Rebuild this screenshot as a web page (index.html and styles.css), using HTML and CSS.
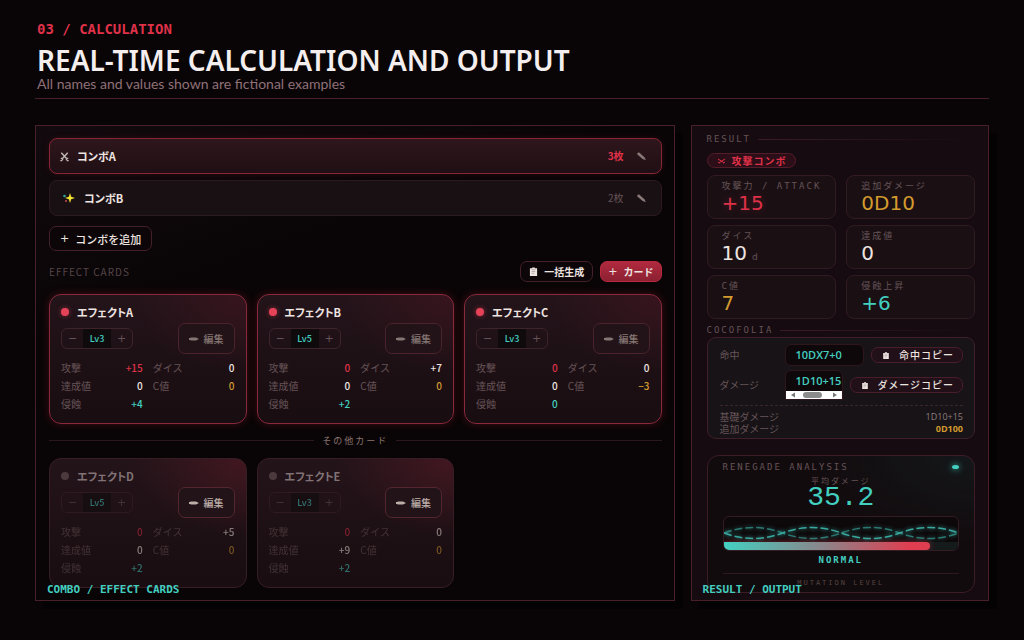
FILE: index.html
```
<!DOCTYPE html>
<html lang="ja">
<head>
<meta charset="utf-8">
<meta name="viewport" content="width=device-width, initial-scale=1">
<title>Real-time calculation and output</title>
<link rel="stylesheet" href="styles.css">
</head>
<body>
<svg class="defs" width="0" height="0" aria-hidden="true">
  <symbol id="i-swords" viewBox="0 0 12 12"><path d="M2.500 2l6 6.500M9.500 2L3.500 8.500" stroke="currentColor" stroke-width="1.500" fill="none"/><path d="M2 7.500l2.500 2.500M10 7.500L7.500 10M1.500 10.500h2M8.500 10.500h2" stroke="currentColor" stroke-width="1.200" fill="none"/></symbol>
  <symbol id="i-pencil" viewBox="0 0 12 12"><path d="M1.500 2.500L3.200 1.300l6 5.400 1.600 3.300-3.600-1.200-6-5.200z" fill="currentColor"/></symbol>
  <symbol id="i-flat" viewBox="0 0 10 6"><path d="M0 2h1.500V1.600H7L10 3 7 4.400H1.500V4H0z" fill="currentColor"/></symbol>
  <symbol id="i-clip" viewBox="0 0 10 10"><path d="M1 1.500h2.500V.5h3v1H9V10H1z" fill="currentColor"/><path d="M3 3h4M3 5h4M3 7h3" stroke="#8b7f80" stroke-width=".6"/></symbol>
</svg>
<div class="page">
  <header class="head">
    <p class="eyebrow">03 / CALCULATION</p>
    <h1 class="title">REAL-TIME CALCULATION AND OUTPUT</h1>
    <p class="sub">All names and values shown are fictional examples</p>
  </header>
  <main class="panels">
    <section class="panel panel-cards">
      <div class="combos">
        <div class="combo combo-on">
          <svg class="combo-icon"><use href="#i-swords"/></svg><span class="combo-name">コンボA</span>
          <span class="count">3枚</span><button class="ghost" aria-label="コンボAを編集"><svg class="pen"><use href="#i-pencil"/></svg></button>
        </div>
        <div class="combo">
          <svg class="spark" viewBox="0 0 18 12"><path d="M11 1l1.200 3.800L16 6l-3.800 1.200L11 11 9.800 7.200 6 6l3.800-1.200z" fill="#f4e230"/><circle cx="5.500" cy="4" r="1.300" fill="#2fa79d"/><circle cx="7" cy="9" r="1" fill="#d04a58"/></svg><span class="combo-name">コンボB</span>
          <span class="count">2枚</span><button class="ghost" aria-label="コンボBを編集"><svg class="pen"><use href="#i-pencil"/></svg></button>
        </div>
      </div>
      <button class="btn add"><span class="plus">+</span>コンボを追加</button>
      <div class="bar">
        <h2 class="bar-title">EFFECT CARDS</h2>
        <button class="btn"><svg class="clip"><use href="#i-clip"/></svg>一括生成</button>
        <button class="btn primary"><span class="plus">+</span>カード</button>
      </div>
      <div class="cards">
        <article class="card card-on">
          <h3 class="name"><i class="dot"></i>エフェクトA</h3>
          <div class="tools"><div class="step"><button>−</button><span class="lv">Lv3</span><button>+</button></div><button class="edit"><svg class="flat"><use href="#i-flat"/></svg>編集</button></div>
          <dl class="stats"><div><dt>攻撃</dt><dd class="red">+15</dd></div><div><dt>ダイス</dt><dd>0</dd></div><div><dt>達成値</dt><dd>0</dd></div><div><dt>C値</dt><dd class="gold">0</dd></div><div><dt>侵蝕</dt><dd class="teal">+4</dd></div></dl>
        </article>
        <article class="card card-on">
          <h3 class="name"><i class="dot"></i>エフェクトB</h3>
          <div class="tools"><div class="step"><button>−</button><span class="lv">Lv5</span><button>+</button></div><button class="edit"><svg class="flat"><use href="#i-flat"/></svg>編集</button></div>
          <dl class="stats"><div><dt>攻撃</dt><dd class="red">0</dd></div><div><dt>ダイス</dt><dd>+7</dd></div><div><dt>達成値</dt><dd>0</dd></div><div><dt>C値</dt><dd class="gold">0</dd></div><div><dt>侵蝕</dt><dd class="teal">+2</dd></div></dl>
        </article>
        <article class="card card-on">
          <h3 class="name"><i class="dot"></i>エフェクトC</h3>
          <div class="tools"><div class="step"><button>−</button><span class="lv">Lv3</span><button>+</button></div><button class="edit"><svg class="flat"><use href="#i-flat"/></svg>編集</button></div>
          <dl class="stats"><div><dt>攻撃</dt><dd class="red">0</dd></div><div><dt>ダイス</dt><dd>0</dd></div><div><dt>達成値</dt><dd>0</dd></div><div><dt>C値</dt><dd class="gold">−3</dd></div><div><dt>侵蝕</dt><dd class="teal">0</dd></div></dl>
        </article>
      </div>
      <p class="divider">その他カード</p>
      <div class="cards">
        <article class="card card-off">
          <h3 class="name"><i class="dot"></i>エフェクトD</h3>
          <div class="tools"><div class="step"><button>−</button><span class="lv">Lv5</span><button>+</button></div><button class="edit"><svg class="flat"><use href="#i-flat"/></svg>編集</button></div>
          <dl class="stats"><div><dt>攻撃</dt><dd class="red">0</dd></div><div><dt>ダイス</dt><dd>+5</dd></div><div><dt>達成値</dt><dd>0</dd></div><div><dt>C値</dt><dd class="gold">0</dd></div><div><dt>侵蝕</dt><dd class="teal">+2</dd></div></dl>
        </article>
        <article class="card card-off">
          <h3 class="name"><i class="dot"></i>エフェクトE</h3>
          <div class="tools"><div class="step"><button>−</button><span class="lv">Lv3</span><button>+</button></div><button class="edit"><svg class="flat"><use href="#i-flat"/></svg>編集</button></div>
          <dl class="stats"><div><dt>攻撃</dt><dd class="red">0</dd></div><div><dt>ダイス</dt><dd>0</dd></div><div><dt>達成値</dt><dd>+9</dd></div><div><dt>C値</dt><dd class="gold">0</dd></div><div><dt>侵蝕</dt><dd class="teal">+2</dd></div></dl>
        </article>
      </div>
      <p class="caption">COMBO / EFFECT CARDS</p>
    </section>

    <section class="panel panel-result">
      <h2 class="section">RESULT</h2>
      <p class="chip"><svg class="chip-icon" viewBox="0 0 10 6"><path d="M1 .8l6.500 4M9 .8L2.500 4.800M1 4l2 1.500M9 4L7 5.500" stroke="currentColor" stroke-width="1.100" fill="none"/></svg>攻撃コンボ</p>
      <dl class="tiles">
        <div class="tile"><dt>攻撃力 / ATTACK</dt><dd class="red glow">+15</dd></div>
        <div class="tile"><dt>追加ダメージ</dt><dd class="gold">0D10</dd></div>
        <div class="tile"><dt>ダイス</dt><dd>10<small>d</small></dd></div>
        <div class="tile"><dt>達成値</dt><dd>0</dd></div>
        <div class="tile"><dt>C値</dt><dd class="gold">7</dd></div>
        <div class="tile"><dt>侵蝕上昇</dt><dd class="teal">+6</dd></div>
      </dl>
      <h2 class="section section-coco">COCOFOLIA</h2>
      <div class="coco">
        <div class="line"><span class="key">命中</span><output class="formula">10DX7+0</output><button class="copy"><svg class="clip-flat"><use href="#i-clip"/></svg>命中コピー</button></div>
        <div class="line line-scroll"><span class="key">ダメージ</span><output class="formula scroller"><span>1D10+15</span><svg class="scrollbar" viewBox="0 0 56 8" preserveAspectRatio="none" aria-hidden="true"><rect width="56" height="8" fill="#fff"/><path d="M9 1.500v5L5 4zM47 1.500v5L51 4z" fill="#777"/><rect x="17" y="1" width="19" height="6" rx="3" fill="#8c8c8c"/></svg></output><button class="copy"><svg class="clip-flat"><use href="#i-clip"/></svg>ダメージコピー</button></div>
        <dl class="base"><div><dt>基礎ダメージ</dt><dd>1D10+15</dd></div><div><dt>追加ダメージ</dt><dd class="gold strong">0D100</dd></div></dl>
      </div>
      <div class="analysis">
        <h2 class="an-head">RENEGADE ANALYSIS<i class="led"></i></h2>
        <p class="avg-label">平均ダメージ</p>
        <p class="avg">35.2</p>
        <div class="meter">
          <svg class="wave" viewBox="0 0 236 25" preserveAspectRatio="none" aria-hidden="true">
            <g fill="none" stroke="#39a99f" stroke-width="1.500" stroke-dasharray="8 3"><path d="M0 16Q29.500 5 59 16T118 16T177 16T236 16" opacity=".65"/><path d="M0 16Q29.500 27 59 16T118 16T177 16T236 16"/></g>
          </svg>
          <div class="track"><div class="fill" style="width:88%"></div></div>
        </div>
        <p class="state">NORMAL</p>
        <p class="mutation">MUTATION LEVEL</p>
      </div>
      <p class="caption">RESULT / OUTPUT</p>
    </section>
  </main>
</div>
</body>
</html>
```
FILE: styles.css
```
:root {
  --red: #df3148;
  --gold: #d39a2e;
  --teal: #43cfc0;
  --line: #492029;
  --muted: #665356;
  --ui: "Noto Sans", "Noto Sans CJK JP", sans-serif;
  --jp: "Noto Sans CJK JP", sans-serif;
  --mono: "DejaVu Sans Mono", "Noto Sans CJK JP", monospace;
}
* { box-sizing: border-box; }
body, h1, h2, h3, p, dl, dd { margin: 0; }
body { background: #090506; color: #eee4e0; font-family: var(--jp); }
button { margin: 0; padding: 0; border: 0; background: none; color: inherit; font: inherit; cursor: pointer; }
svg { flex: none; }
.defs { position: absolute; }
.page { padding: 20px 35px 30px; }

.head { padding: 0 2px 5px; border-bottom: 1px solid var(--line); margin-bottom: 26px; }
.eyebrow { color: var(--red); font: bold 14px/18px var(--mono); margin-bottom: 7px; }
.title { color: #f4eeee; font: 600 28px/30px var(--ui); }
.sub { color: #907078; font: 14px/18px Lato, sans-serif; }

.panels { display: grid; grid-template-columns: 15fr 7fr; gap: 16px; }
.panel { position: relative; min-width: 0; border: 1px solid var(--line); box-shadow: 8px 8px 0 #040203; }
.panel-cards { padding: 12px 12px 12px 13px; background: linear-gradient(160deg, #120a0e, #090506 30%); }
.panel-result { padding: 6px 13px 7px 15px; background: #150b10; }
.caption { position: absolute; left: 11px; bottom: 3px; color: var(--teal); font: bold 11px/14px var(--mono); }

.red { color: var(--red); }
.gold { color: var(--gold); }
.teal { color: var(--teal); }

.combos { display: grid; gap: 6px; }
.combo { display: flex; align-items: center; height: 36px; padding: 0 14px 0 9px; border: 1px solid #2c1a20; border-radius: 8px; background: #191013; font: bold 11px/18px var(--jp); font-feature-settings: "palt"; }
.combo-on { border-color: #892536; background: linear-gradient(#2e161c, #1f0f14); box-shadow: 0 0 6px #5c142055; }
.combo-icon { width: 11px; height: 11px; margin-right: 7px; color: #c5bcba; }
.spark { width: 18px; height: 12px; margin-right: 7px; }
.combo-name { flex: 1; }
.count { color: var(--muted); font-size: 10px; font-weight: 400; margin-right: 12px; }
.combo-on .count { color: var(--red); font-weight: 700; }
.ghost { display: flex; }
.pen { width: 11px; height: 11px; color: #887878; }

.btn { display: flex; align-items: center; justify-content: center; gap: 6px; height: 21px; padding: 0 8px; border: 1px solid #442028; border-radius: 7px; background: #0c0608; font: bold 10px/14px var(--jp); }
.plus { font: 11px/14px "DejaVu Sans", sans-serif; }
.add { height: 25px; margin-top: 10px; padding: 0 10px; font: 500 11px/16px var(--jp); }
.clip { width: 9px; height: 9px; }
.primary { padding: 0 7px; border-color: #b8283f; background: linear-gradient(#b12a3e, #8b2032); }
.bar { display: flex; align-items: center; gap: 7px; margin: 10px 0 12px; }
.bar-title { flex: 1; color: #554548; font: 10px/16px var(--jp); letter-spacing: 1px; }

.cards { display: grid; grid-template-columns: repeat(3, minmax(0, 1fr)); gap: 10px; }
.card { padding: 8px 11px 10px; border: 1px solid #371d24; border-radius: 12px; background: radial-gradient(ellipse at 100% 0, #421720, transparent 42%), linear-gradient(#23141a, #190d11); }
.card-on { border-color: #8a293b; background: radial-gradient(ellipse at 100% 0, #37141d, transparent 42%), linear-gradient(#23141a, #180d11); box-shadow: 0 0 8px #8a182a66; }
.name { display: flex; align-items: center; gap: 8px; font: bold 11px/18px var(--jp); font-feature-settings: "palt"; }
.dot { width: 8px; height: 8px; border-radius: 50%; background: #e64258; box-shadow: 0 0 5px #e6425888; }
.tools { display: flex; align-items: center; justify-content: space-between; margin: 2px 0 5px; }
.step { display: grid; grid-template-columns: 21px 28px 21px; height: 21px; border: 1px solid #3d242b; border-radius: 6px; overflow: hidden; color: #665156; text-align: center; font: 11px/19px "DejaVu Sans", sans-serif; }
.lv { background: #0f0b0d; color: var(--teal); font: 500 9px/19px var(--jp); }
.edit { display: flex; align-items: center; gap: 5px; height: 31px; padding: 0 10px; border: 1px solid #4b232c; border-radius: 7px; background: #211318; color: #857673; font: 500 10px/14px var(--jp); }
.flat { width: 10px; height: 6px; }
.stats { display: grid; grid-template-columns: 1fr 1fr; column-gap: 10px; font: 10px/18px var(--jp); }
.stats div { display: flex; justify-content: space-between; }
.stats dt { color: var(--muted); }
.stats dd { font-weight: 500; }
.card-off .name { color: #817276; }
.card-off .dot { background: #4c393e; box-shadow: none; }
.card-off .step, .card-off .stats { opacity: .5; }
.card-off .edit { color: #bdaea8; border-color: #54262f; }
.divider { display: flex; align-items: center; gap: 8px; margin: 8px 0 9px; color: #8c7672; font: 9px/17px var(--jp); letter-spacing: 2px; }
.divider::before, .divider::after { content: ""; flex: 1; height: 1px; background: #2b181d; }

.section { display: flex; align-items: center; gap: 7px; color: var(--muted); font: 9px/14px var(--mono); letter-spacing: 2px; }
.section::after { content: ""; flex: 1; height: 1px; background: linear-gradient(90deg, #3c1c24, transparent); }
.chip { display: flex; width: max-content; align-items: center; gap: 6px; height: 15px; margin: 7px 0; padding: 0 8px 0 9px; border: 1px solid #551c29; border-radius: 10px; background: #2b0e17; color: var(--red); font: bold 10px/13px var(--jp); letter-spacing: 1px; }
.chip-icon { width: 9px; height: 6px; }
.tiles { display: grid; grid-template-columns: 1fr 1fr; gap: 6px 10px; }
.tile { height: 44px; padding: 4px 14px; border: 1px solid #321a21; border-radius: 8px; background: #1a1014; }
.tile dt { color: var(--muted); font: 9px/13px var(--mono); letter-spacing: 2px; white-space: nowrap; }
.tile dd { font: 20px/20px "DejaVu Sans", sans-serif; }
.tile small { margin-left: 5px; color: var(--muted); font-size: 9px; }
.glow { text-shadow: 0 0 8px #df314855; }
.section-coco { margin-top: 4px; }

.coco { padding: 6px 11px 3px 12px; border: 1px solid #3f1f28; border-radius: 9px; background: #171317; }
.line { display: flex; align-items: center; height: 22px; }
.key { flex: none; width: 65px; color: var(--muted); font: 10px/14px var(--jp); }
.formula { flex: 1; min-width: 0; height: 22px; padding: 0 10px; overflow: hidden; border: 1px solid #2d171d; border-radius: 6px; background: #0f080b; color: var(--teal); font: 600 11px/20px "Open Sans", sans-serif; white-space: nowrap; }
.line-scroll { height: 30px; margin-top: 4px; }
.scroller { display: flex; flex-direction: column; height: 30px; padding: 0; border-radius: 6px 6px 0 0; }
.scroller span { padding-left: 10px; overflow: hidden; }
.scrollbar { width: 100%; height: 8px; }
.copy { display: flex; flex: none; align-items: center; gap: 9px; height: 16px; margin-left: 7px; padding: 0 8px 0 10px; border: 1px solid #471e29; border-radius: 7px; background: #221018; font: 500 10px/14px var(--jp); letter-spacing: 1px; }
.clip-flat { width: 8px; height: 7px; }
.base { margin-top: 5px; padding-top: 5px; border-top: 1px dashed #38262b; font: 10px/12px var(--jp); }
.base div { display: flex; justify-content: space-between; }
.base dt { color: var(--muted); }
.base dd { color: #8d7e7e; font: 9px/12px "Open Sans", sans-serif; }
.base .strong { color: var(--gold); font-weight: 700; }

.analysis { margin-top: 16px; padding: 4px 15px 2px; border: 1px solid #3c1d26; border-radius: 12px; background: radial-gradient(ellipse at 100% 0, #17292a66, transparent 45%), #120b0e; text-align: center; }
.an-head { display: flex; align-items: center; justify-content: space-between; color: var(--muted); font: 9px/14px var(--mono); letter-spacing: 2px; }
.led { width: 7px; height: 4px; border-radius: 50%; background: var(--teal); box-shadow: 0 0 6px var(--teal); }
.avg-label { margin-top: 1px; color: var(--muted); font: 8px/12px var(--jp); letter-spacing: 2px; }
.avg { color: var(--teal); font: 28px/22px "Liberation Mono", monospace; }
.meter { margin-top: 7px; border: 1px solid #341c23; border-radius: 6px; background: #0d080a; overflow: hidden; }
.wave { display: block; width: 100%; height: 25px; filter: drop-shadow(0 0 2px #39a99f); }
.track { height: 8px; background: #151a1b; }
.fill { height: 8px; border-radius: 0 4px 4px 0; background: linear-gradient(90deg, var(--teal), #8f8288 50%, #df3e50 90%); box-shadow: 0 0 6px #df3e5088; }
.state { color: var(--teal); font: bold 9px/14px var(--mono); letter-spacing: 2px; margin: 2px 0 6px; }
.mutation { padding-top: 2px; border-top: 1px solid #2f191f; color: #54443f; font: 7px/14px var(--mono); letter-spacing: 2px; }
```
